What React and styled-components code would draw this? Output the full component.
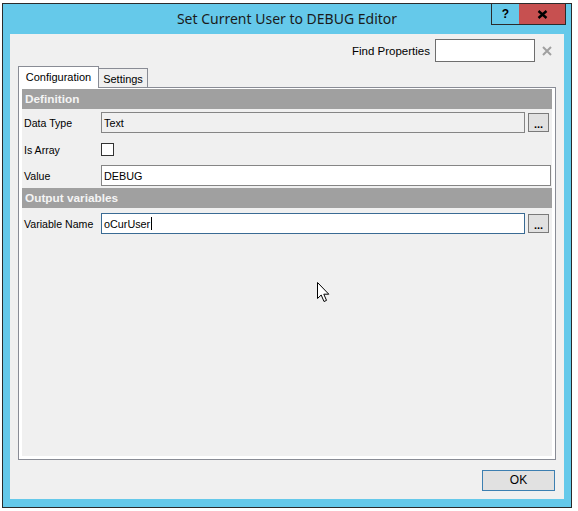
import React from 'react'
import styled, { createGlobalStyle } from 'styled-components'

const FRAME_BLUE = `#65c9ea`
const CLIENT_GRAY = `#f0f0f0`
const HEADER_GRAY = `#a0a0a0`
const TAB_BORDER = `#898c95`
const UI_FONT = `"Liberation Sans", Arial, sans-serif`

const GlobalStyle = createGlobalStyle`
  body {
    margin: 0;
    background: #ffffff;
  }
`

const Desktop = styled.div`
  box-sizing: border-box;
  height: 511px;
  overflow: hidden;
  padding: 3px 0 0 2px;
  width: 578px;
`

const Window = styled.div`
  background: ${FRAME_BLUE};
  border: 1px solid #2b2b2b;
  box-sizing: border-box;
  display: flex;
  flex-direction: column;
  height: 505px;
  position: relative;
  width: 570px;
`

const TitleBar = styled.div`
  align-items: start;
  display: grid;
  grid-template-columns: 1fr auto 1fr;
  height: 30px;
`

const Title = styled.div`
  color: #1b1b1b;
  font-family: "Noto Sans", sans-serif;
  font-size: 14px;
  grid-column: 2;
  line-height: 29px;
  white-space: nowrap;
`

const CaptionButtons = styled.div`
  border: 1px solid #2b2b2b;
  display: flex;
  grid-column: 3;
  height: 20px;
  justify-self: end;
  margin: -1px 5px 0 0;
`

const CaptionButton = styled.div`
  align-items: center;
  background: ${(p) => (p.$close ? '#c75050' : FRAME_BLUE)};
  color: #000;
  display: flex;
  font-family: ${UI_FONT};
  font-size: 12px;
  font-weight: bold;
  justify-content: center;
  width: ${(p) => (p.$close ? '46px' : '27px')};
`

const Client = styled.div`
  background: ${CLIENT_GRAY};
  display: flex;
  flex: 1;
  flex-direction: column;
  font-family: ${UI_FONT};
  margin: 0 7px 8px 7px;
  padding: 5px 8px 0 8px;
`

const FindRow = styled.div`
  align-items: center;
  display: flex;
  height: 23px;
  justify-content: flex-end;
  padding-right: 4px;
`

const FindLabel = styled.span`
  color: #000;
  font-size: 11.5px;
  margin-right: 5px;
`

const SearchBox = styled.div`
  background: #fff;
  border: 1px solid #6e6e6e;
  box-sizing: border-box;
  height: 23px;
  margin-right: 7px;
  width: 100px;
`

const TabStrip = styled.div`
  align-items: flex-end;
  display: flex;
  height: 21px;
  margin-top: 4px;
`

const Tab = styled.div`
  background: ${(p) => (p.$active ? '#fff' : CLIENT_GRAY)};
  border: 1px solid ${TAB_BORDER};
  border-bottom: none;
  border-left: ${(p) => (p.$active ? `1px solid ${TAB_BORDER}` : 'none')};
  box-sizing: border-box;
  color: #000;
  font-size: 11px;
  height: ${(p) => (p.$active ? '22px' : '19px')};
  line-height: ${(p) => (p.$active ? '20px' : '20px')};
  margin-bottom: ${(p) => (p.$active ? '-1px' : '0')};
  position: relative;
  text-align: center;
  width: ${(p) => p.$width}px;
  z-index: ${(p) => (p.$active ? 1 : 0)};
`

const Panel = styled.div`
  background: #fff;
  border: 1px solid ${TAB_BORDER};
  box-sizing: border-box;
  display: flex;
  flex-direction: column;
  height: 373px;
  padding: 1px 3px 3px 3px;
`

const PanelBody = styled.div`
  background: ${CLIENT_GRAY};
  display: flex;
  flex: 1;
  flex-direction: column;
`

const SectionHeader = styled.div`
  background: ${HEADER_GRAY};
  color: #f4f4f4;
  font-size: 11.8px;
  font-weight: bold;
  height: 20px;
  line-height: 20px;
  padding-left: 3px;
`

const PropRow = styled.div`
  align-items: center;
  display: grid;
  grid-template-columns: 79px 1fr;
  height: ${(p) => p.$height}px;
`

const PropLabel = styled.span`
  color: #000;
  font-size: 10.6px;
  padding-left: 2px;
`

const FieldCell = styled.div`
  align-items: center;
  display: flex;
  gap: 3px;
  padding-right: ${(p) => (p.$button ? '3px' : '1px')};
`

const Field = styled.div`
  align-items: center;
  background: ${(p) => (p.$readOnly ? CLIENT_GRAY : '#fff')};
  border: 1px solid ${(p) => (p.$focused ? '#3a6b94' : '#858585')};
  box-sizing: border-box;
  color: #000;
  display: flex;
  flex: 1;
  font-size: 10.8px;
  height: 21px;
  padding-left: 2px;
`

const Caret = styled.span`
  background: #000;
  display: inline-block;
  height: 13px;
  margin-left: 1px;
  width: 1px;
`

const BrowseButton = styled.div`
  background: #e1e1e1;
  border: 1px solid #7a7a7a;
  box-sizing: border-box;
  color: #000;
  font-size: 11px;
  font-weight: bold;
  height: 19px;
  line-height: 20px;
  text-align: center;
  width: 21px;
`

const CheckBox = styled.div`
  background: #fff;
  border: 1px solid #333;
  box-sizing: border-box;
  height: 13px;
  width: 13px;
`

const Footer = styled.div`
  display: flex;
  justify-content: flex-end;
  padding: 10px 1px 0 0;
`

const OkButton = styled.div`
  background: #e1e1e1;
  border: 1px solid #3c7fb1;
  box-sizing: border-box;
  color: #000;
  font-size: 12px;
  height: 21px;
  line-height: 19px;
  text-align: center;
  width: 73px;
`

const Pointer = styled.svg`
  left: 314px;
  position: absolute;
  top: 278px;
`

const CloseGlyph = () => (
  <svg width="11" height="9" viewBox="0 0 11 9">
    <path d="M1.5 1 L9.5 8 M9.5 1 L1.5 8" stroke="#000" strokeWidth="2.4" />
  </svg>
)

const ClearGlyph = () => (
  <svg width="10" height="10" viewBox="0 0 10 10">
    <path d="M1 1 L9 9 M9 1 L1 9" stroke="#a0a0a0" strokeWidth="2" />
  </svg>
)

const Property = ({ label, height, children, button }) => (
  <PropRow $height={height}>
    <PropLabel>{label}</PropLabel>
    <FieldCell $button={button}>
      {children}
      {button && <BrowseButton>...</BrowseButton>}
    </FieldCell>
  </PropRow>
)

export default function App() {
  return (
    <Desktop>
      <GlobalStyle />
      <Window>
        <TitleBar>
          <Title>Set Current User to DEBUG Editor</Title>
          <CaptionButtons>
            <CaptionButton>?</CaptionButton>
            <CaptionButton $close>
              <CloseGlyph />
            </CaptionButton>
          </CaptionButtons>
        </TitleBar>
        <Client>
          <FindRow>
            <FindLabel>Find Properties</FindLabel>
            <SearchBox />
            <ClearGlyph />
          </FindRow>
          <TabStrip>
            <Tab $active $width={81}>Configuration</Tab>
            <Tab $width={49}>Settings</Tab>
          </TabStrip>
          <Panel>
            <PanelBody>
              <SectionHeader>Definition</SectionHeader>
              <Property label="Data Type" height={27} button>
                <Field $readOnly>Text</Field>
              </Property>
              <Property label="Is Array" height={27}>
                <CheckBox />
              </Property>
              <Property label="Value" height={25}>
                <Field>DEBUG</Field>
              </Property>
              <SectionHeader>Output variables</SectionHeader>
              <Property label="Variable Name" height={31} button>
                <Field $focused>
                  oCurUser
                  <Caret />
                </Field>
              </Property>
            </PanelBody>
          </Panel>
          <Footer>
            <OkButton>OK</OkButton>
          </Footer>
        </Client>
        <Pointer width="13" height="21" viewBox="0 0 13 21">
          <path
            d="M0.5 0.5 L0.5 16.5 L4.2 13 L7 19.5 L9.5 18.4 L6.8 12.2 L11.8 12.2 Z"
            fill="#fff"
            stroke="#000"
            strokeWidth="1"
          />
        </Pointer>
      </Window>
    </Desktop>
  )
}
